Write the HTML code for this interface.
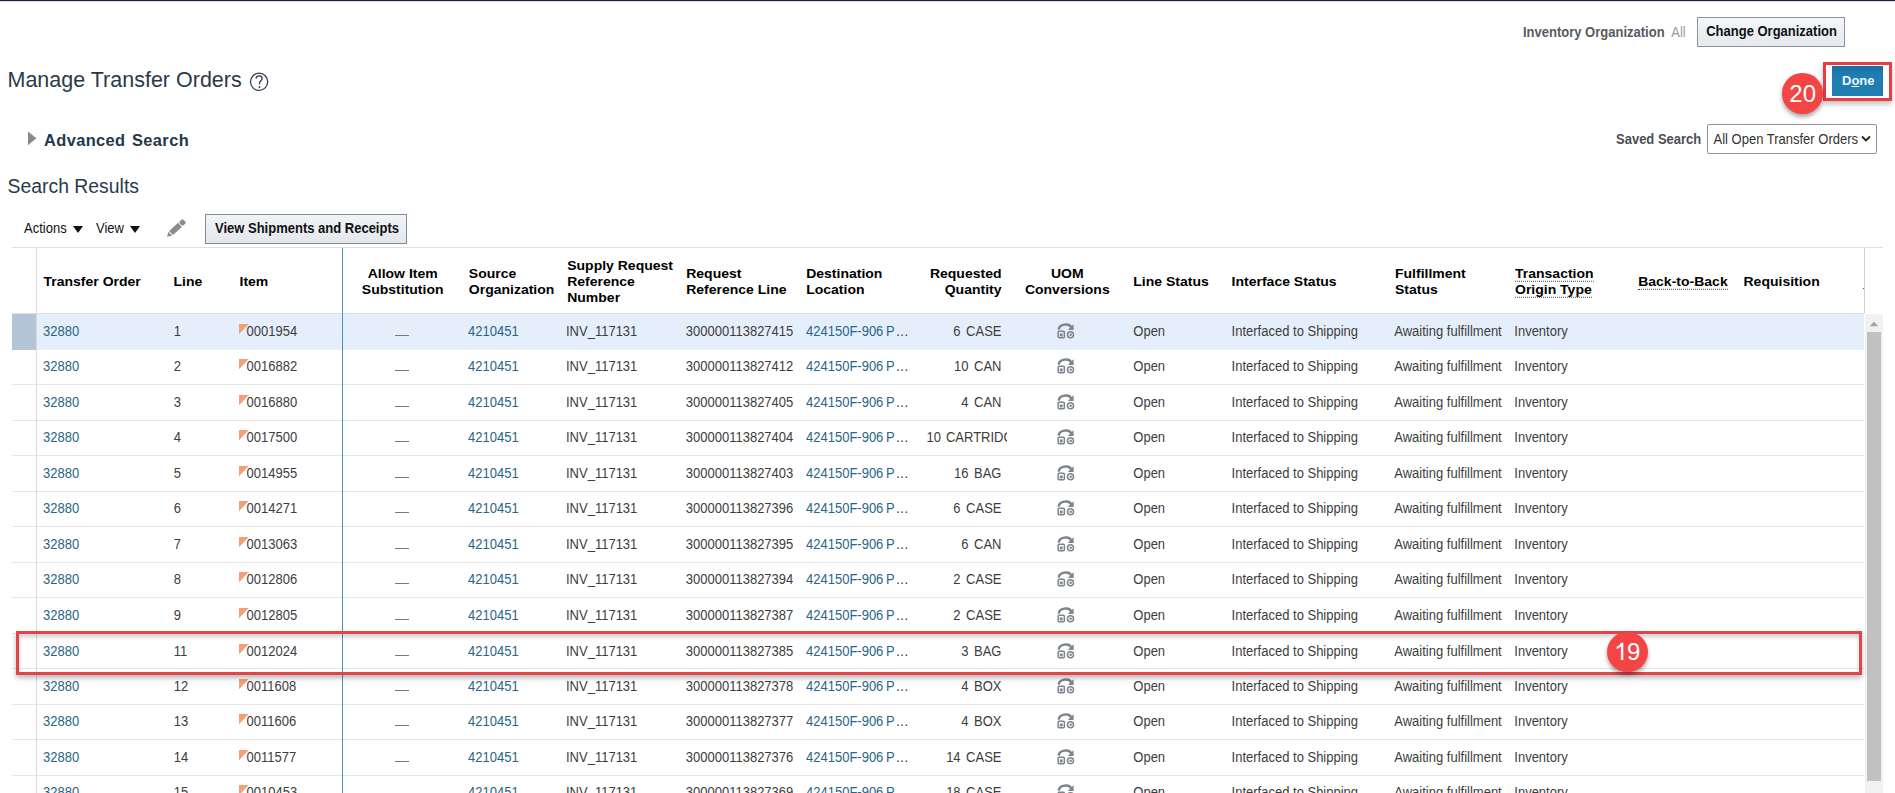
<!DOCTYPE html>
<html><head><meta charset="utf-8"><title>Manage Transfer Orders</title><style>
*{box-sizing:border-box;margin:0;padding:0}
html,body{width:1895px;height:793px;overflow:hidden;background:#fff}
body{position:relative;font-family:"Liberation Sans",sans-serif;color:#333}
.a{position:absolute;white-space:nowrap}
.lk{color:#296586}
.hl{position:absolute;height:1px;background:#e6e6e6}
</style></head><body>
<div class="a" style="left:0;top:0;width:1895px;height:1px;background:#221c4a"></div>
<div class="a" style="left:0;top:1px;width:1895px;height:1px;background:#dcdae6"></div>
<div class="a " style="left:1523px;top:25.30px;font-size:13px;line-height:16px;font-weight:bold;color:#555b63;transform:scaleY(1.08);transform-origin:0 12.50px;">Inventory Organization</div>
<div class="a " style="left:1671.3px;top:25.30px;font-size:13px;line-height:16px;color:#9a9a9a;transform:scaleY(1.08);transform-origin:0 12.50px;">All</div>
<div class="a" style="left:1697px;top:17px;width:148px;height:30px;border:1px solid #8a949e;background:linear-gradient(#f4f6f8,#e6e9ed)"></div>
<div class="a " style="left:1706.2px;top:23.90px;font-size:13px;line-height:16px;font-weight:bold;color:#111;transform:scaleY(1.08);transform-origin:0 12.50px;">Change Organization</div>
<div class="a " style="left:7.5px;top:67.45px;font-size:21.5px;line-height:27px;color:#2a3a4a;transform:scaleY(1.03);transform-origin:0 20.95px;">Manage Transfer Orders</div>
<svg class="a" style="left:249px;top:72px" width="20" height="20" viewBox="0 0 20 20"><circle cx="10.1" cy="9.8" r="8.6" fill="none" stroke="#2f3b48" stroke-width="1.25"/><path d="M7.0 6.6 C7.2 4.6 8.6 3.9 10.1 3.9 C12.0 3.9 13.2 5.0 13.2 6.6 C13.2 8.4 11.2 8.9 10.6 10.6 L10.5 12.4" fill="none" stroke="#2f3b48" stroke-width="1.3"/><rect x="9.7" y="14.2" width="1.6" height="1.7" fill="#2f3b48"/></svg>
<div class="a" style="left:1823px;top:62px;width:69px;height:39px;border:3px solid #e53f45;box-shadow:0 3px 5px rgba(0,0,0,.25)"></div>
<div class="a" style="left:1832px;top:66px;width:51px;height:30px;background:linear-gradient(#1b6f9f,#1f7db2 30%)"></div>
<div class="a " style="left:1842px;top:73.20px;font-size:13px;line-height:16px;font-weight:bold;color:#eaf6ff;transform:scaleY(1.0);transform-origin:0 12.50px;">D<span style="text-decoration:underline">o</span>ne</div>
<div class="a" style="left:1782px;top:73px;width:40.5px;height:40.5px;border-radius:50%;background:#f44444;box-shadow:0 3px 4px rgba(0,0,0,.35)"></div>
<div class="a " style="left:1789.3px;top:78.78px;font-size:24px;line-height:30px;color:#fff;transform:scaleY(1.0);transform-origin:0 23.32px;">20</div>
<svg class="a" style="left:27px;top:131px" width="10" height="15" viewBox="0 0 10 15"><path d="M1 0.5 L9.4 7.3 L1 14.2 Z" fill="#8a8a8a"/></svg>
<div class="a " style="left:44px;top:129.82px;font-size:16.4px;line-height:20px;font-weight:bold;color:#24384c;transform:scaleY(1.0);transform-origin:0 15.68px;letter-spacing:0.4px;word-spacing:1.5px">Advanced Search</div>
<div class="a " style="left:1616px;top:131.80px;font-size:13px;line-height:16px;font-weight:bold;color:#4a4f55;transform:scaleY(1.08);transform-origin:0 12.50px;">Saved Search</div>
<div class="a" style="left:1707px;top:124px;width:170px;height:30px;border:1px solid #8d959c;border-radius:2px;background:#fff"></div>
<div class="a " style="left:1713.5px;top:131.80px;font-size:13px;line-height:16px;color:#333;transform:scaleY(1.08);transform-origin:0 12.50px;">All Open Transfer Orders</div>
<svg class="a" style="left:1861px;top:135px" width="10" height="8" viewBox="0 0 10 8"><path d="M1 1.5 L5 5.5 L9 1.5" fill="none" stroke="#222" stroke-width="1.8"/></svg>
<div class="a " style="left:7.5px;top:173.98px;font-size:19.4px;line-height:24px;color:#2a3a4a;transform:scaleY(1.0);transform-origin:0 18.72px;">Search Results</div>
<div class="a " style="left:24px;top:220.70px;font-size:13px;line-height:16px;color:#111;transform:scaleY(1.08);transform-origin:0 12.50px;">Actions</div>
<svg class="a" style="left:73px;top:226px" width="10" height="7" viewBox="0 0 10 7"><path d="M0 0 H10 L5 7 Z" fill="#111"/></svg>
<div class="a " style="left:96px;top:220.70px;font-size:13px;line-height:16px;color:#111;transform:scaleY(1.08);transform-origin:0 12.50px;">View</div>
<svg class="a" style="left:130px;top:226px" width="10" height="7" viewBox="0 0 10 7"><path d="M0 0 H10 L5 7 Z" fill="#111"/></svg>
<svg class="a" style="left:160px;top:215px" width="30" height="28" viewBox="0 0 30 28"><g transform="translate(7.0 21.8) rotate(-42.6)" fill="#8c8c8c"><path d="M0 0 L4.6 -2.75 L4.6 2.75 Z"/><rect x="5.5" y="-2.75" width="12.1" height="5.5"/><rect x="18.5" y="-2.75" width="5.2" height="5.5" rx="1.4"/></g></svg>
<div class="a" style="left:205px;top:214px;width:202px;height:30px;border:1px solid #7f8d9a;background:linear-gradient(#f1f3f6,#e3e7ec)"></div>
<div class="a " style="left:215px;top:221.10px;font-size:13px;line-height:16px;font-weight:bold;color:#111;transform:scaleY(1.08);transform-origin:0 12.50px;">View Shipments and Receipts</div>
<div class="a" style="left:12px;top:247px;width:1871px;height:1px;background:#dde0e3"></div>
<div class="a" style="left:12px;top:313px;width:1852px;height:1px;background:#dcdfe3"></div>
<div class="a" style="left:1864px;top:248px;width:1px;height:65px;background:#cfcfcf"></div>
<div class="a" style="left:1863px;top:288px;width:1px;height:1px;background:#555"></div>
<div class="a" style="left:36px;top:314px;width:1828px;height:35.5px;background:#e5effb"></div>
<div class="a" style="left:12px;top:314px;width:24px;height:35.5px;background:#b3c4d6"></div>
<div class="hl" style="left:12px;top:384.00px;width:1852px"></div>
<div class="hl" style="left:12px;top:419.50px;width:1852px"></div>
<div class="hl" style="left:12px;top:455.00px;width:1852px"></div>
<div class="hl" style="left:12px;top:490.50px;width:1852px"></div>
<div class="hl" style="left:12px;top:526.00px;width:1852px"></div>
<div class="hl" style="left:12px;top:561.50px;width:1852px"></div>
<div class="hl" style="left:12px;top:597.00px;width:1852px"></div>
<div class="hl" style="left:12px;top:632.50px;width:1852px"></div>
<div class="hl" style="left:12px;top:668.00px;width:1852px"></div>
<div class="hl" style="left:12px;top:703.50px;width:1852px"></div>
<div class="hl" style="left:12px;top:739.00px;width:1852px"></div>
<div class="hl" style="left:12px;top:774.50px;width:1852px"></div>
<div class="hl" style="left:12px;top:810.00px;width:1852px"></div>
<div class="a" style="left:36px;top:248px;width:1px;height:545px;background:#d9d9d9"></div>
<div class="a" style="left:342px;top:248px;width:1px;height:545px;background:#4594b3"></div>
<div class="a " style="left:43.5px;top:272.25px;font-size:14px;line-height:18px;font-weight:bold;color:#000;transform:scaleY(0.94);transform-origin:0 13.85px;">Transfer Order</div>
<div class="a " style="left:173.5px;top:272.25px;font-size:14px;line-height:18px;font-weight:bold;color:#000;transform:scaleY(0.94);transform-origin:0 13.85px;">Line</div>
<div class="a " style="left:239.5px;top:272.25px;font-size:14px;line-height:18px;font-weight:bold;color:#000;transform:scaleY(0.94);transform-origin:0 13.85px;">Item</div>
<div class="a " style="left:342.7px;top:264.25px;font-size:14px;line-height:18px;font-weight:bold;color:#000;transform:scaleY(0.94);transform-origin:0 13.85px;width:120px;text-align:center;">Allow Item</div>
<div class="a " style="left:342.7px;top:280.25px;font-size:14px;line-height:18px;font-weight:bold;color:#000;transform:scaleY(0.94);transform-origin:0 13.85px;width:120px;text-align:center;">Substitution</div>
<div class="a " style="left:468.8px;top:264.25px;font-size:14px;line-height:18px;font-weight:bold;color:#000;transform:scaleY(0.94);transform-origin:0 13.85px;">Source</div>
<div class="a " style="left:468.8px;top:280.25px;font-size:14px;line-height:18px;font-weight:bold;color:#000;transform:scaleY(0.94);transform-origin:0 13.85px;">Organization</div>
<div class="a " style="left:567.2px;top:256.25px;font-size:14px;line-height:18px;font-weight:bold;color:#000;transform:scaleY(0.94);transform-origin:0 13.85px;">Supply Request</div>
<div class="a " style="left:567.2px;top:272.25px;font-size:14px;line-height:18px;font-weight:bold;color:#000;transform:scaleY(0.94);transform-origin:0 13.85px;">Reference</div>
<div class="a " style="left:567.2px;top:288.25px;font-size:14px;line-height:18px;font-weight:bold;color:#000;transform:scaleY(0.94);transform-origin:0 13.85px;">Number</div>
<div class="a " style="left:686.2px;top:264.25px;font-size:14px;line-height:18px;font-weight:bold;color:#000;transform:scaleY(0.94);transform-origin:0 13.85px;">Request</div>
<div class="a " style="left:686.2px;top:280.25px;font-size:14px;line-height:18px;font-weight:bold;color:#000;transform:scaleY(0.94);transform-origin:0 13.85px;">Reference Line</div>
<div class="a " style="left:806.2px;top:264.25px;font-size:14px;line-height:18px;font-weight:bold;color:#000;transform:scaleY(0.94);transform-origin:0 13.85px;">Destination</div>
<div class="a " style="left:806.2px;top:280.25px;font-size:14px;line-height:18px;font-weight:bold;color:#000;transform:scaleY(0.94);transform-origin:0 13.85px;">Location</div>
<div class="a " style="left:881.5px;top:264.25px;font-size:14px;line-height:18px;font-weight:bold;color:#000;transform:scaleY(0.94);transform-origin:0 13.85px;width:120px;text-align:right;">Requested</div>
<div class="a " style="left:881.5px;top:280.25px;font-size:14px;line-height:18px;font-weight:bold;color:#000;transform:scaleY(0.94);transform-origin:0 13.85px;width:120px;text-align:right;">Quantity</div>
<div class="a " style="left:1007.3px;top:264.25px;font-size:14px;line-height:18px;font-weight:bold;color:#000;transform:scaleY(0.94);transform-origin:0 13.85px;width:120px;text-align:center;">UOM</div>
<div class="a " style="left:1007.3px;top:280.25px;font-size:14px;line-height:18px;font-weight:bold;color:#000;transform:scaleY(0.94);transform-origin:0 13.85px;width:120px;text-align:center;">Conversions</div>
<div class="a " style="left:1133.3px;top:272.25px;font-size:14px;line-height:18px;font-weight:bold;color:#000;transform:scaleY(0.94);transform-origin:0 13.85px;">Line Status</div>
<div class="a " style="left:1231.6px;top:272.25px;font-size:14px;line-height:18px;font-weight:bold;color:#000;transform:scaleY(0.94);transform-origin:0 13.85px;">Interface Status</div>
<div class="a " style="left:1395px;top:264.25px;font-size:14px;line-height:18px;font-weight:bold;color:#000;transform:scaleY(0.94);transform-origin:0 13.85px;">Fulfillment</div>
<div class="a " style="left:1395px;top:280.25px;font-size:14px;line-height:18px;font-weight:bold;color:#000;transform:scaleY(0.94);transform-origin:0 13.85px;">Status</div>
<div class="a " style="left:1515px;top:264.25px;font-size:14px;line-height:18px;font-weight:bold;color:#000;transform:scaleY(0.94);transform-origin:0 13.85px;"><span style="border-bottom:1px dotted #444;padding-bottom:0">Transaction</span></div>
<div class="a " style="left:1515px;top:280.25px;font-size:14px;line-height:18px;font-weight:bold;color:#000;transform:scaleY(0.94);transform-origin:0 13.85px;"><span style="border-bottom:1px dotted #444;padding-bottom:0">Origin Type</span></div>
<div class="a " style="left:1638.2px;top:272.25px;font-size:14px;line-height:18px;font-weight:bold;color:#000;transform:scaleY(0.94);transform-origin:0 13.85px;"><span style="border-bottom:1px dotted #444;padding-bottom:0">Back-to-Back</span></div>
<div class="a " style="left:1743.5px;top:272.25px;font-size:14px;line-height:18px;font-weight:bold;color:#000;transform:scaleY(0.94);transform-origin:0 13.85px;">Requisition</div>
<div class="a lk" style="left:43px;top:323.55px;font-size:13px;line-height:16px;color:#296586;transform:scaleY(1.08);transform-origin:0 12.50px;">32880</div>
<div class="a " style="left:173.8px;top:323.55px;font-size:13px;line-height:16px;color:#3d3d3d;transform:scaleY(1.08);transform-origin:0 12.50px;">1</div>
<svg class="a" style="left:239px;top:323.55px" width="10" height="11" viewBox="0 0 10 11"><path d="M0 0 H9.8 L0 10.2 Z" fill="#f1a078"/></svg>
<div class="a " style="left:246.5px;top:323.55px;font-size:13px;line-height:16px;color:#3d3d3d;transform:scaleY(1.08);transform-origin:0 12.50px;">0001954</div>
<div class="a" style="left:395px;top:334.75px;width:14px;height:1.2px;background:#7a7a7a"></div>
<div class="a " style="left:468px;top:323.55px;font-size:13px;line-height:16px;color:#296586;transform:scaleY(1.08);transform-origin:0 12.50px;">4210451</div>
<div class="a " style="left:566px;top:323.55px;font-size:13px;line-height:16px;color:#3d3d3d;transform:scaleY(1.08);transform-origin:0 12.50px;">INV_117131</div>
<div class="a " style="left:685.8px;top:323.55px;font-size:13px;line-height:16px;color:#3d3d3d;transform:scaleY(1.08);transform-origin:0 12.50px;">300000113827415</div>
<div class="a " style="left:806px;top:323.55px;font-size:13px;line-height:16px;color:#296586;transform:scaleY(1.08);transform-origin:0 12.50px;">424150F-906<span style="margin-left:2.7px">P</span><span style="color:#333;letter-spacing:0.45px;margin-left:1.6px">...</span></div>
<div class="a " style="left:900px;top:323.55px;font-size:13px;line-height:16px;color:#3d3d3d;transform:scaleY(1.08);transform-origin:0 12.50px;width:101.5px;text-align:right">6<span style="margin-left:5.5px">CASE</span></div>
<div class="a" style="left:1056.5px;top:322.85px;width:18px;height:16px"><svg width="18" height="16" viewBox="0 0 18 16"><path d="M1.7 6.6 C2.2 1.0 11.8 -0.3 14.3 4.3" fill="none" stroke="#7d848b" stroke-width="2.5"/><path d="M16.6 1.3 L16.6 7.1 L10.8 7.1 Z" fill="#7d848b"/><rect x="1.15" y="8.35" width="6.2" height="6.3" rx="1" fill="none" stroke="#7d848b" stroke-width="1.5"/><rect x="2.8" y="10.5" width="2.8" height="2.9" fill="#7d848b"/><circle cx="13.5" cy="11.7" r="3.0" fill="none" stroke="#7d848b" stroke-width="1.5"/><circle cx="13.7" cy="11.8" r="1.2" fill="#7d848b"/></svg></div>
<div class="a " style="left:1133.3px;top:323.55px;font-size:13px;line-height:16px;color:#3d3d3d;transform:scaleY(1.08);transform-origin:0 12.50px;">Open</div>
<div class="a " style="left:1231.6px;top:323.55px;font-size:13px;line-height:16px;color:#3d3d3d;transform:scaleY(1.08);transform-origin:0 12.50px;">Interfaced to Shipping</div>
<div class="a " style="left:1394.3px;top:323.55px;font-size:13px;line-height:16px;color:#3d3d3d;transform:scaleY(1.08);transform-origin:0 12.50px;">Awaiting fulfillment</div>
<div class="a " style="left:1514.3px;top:323.55px;font-size:13px;line-height:16px;color:#3d3d3d;transform:scaleY(1.08);transform-origin:0 12.50px;">Inventory</div>
<div class="a lk" style="left:43px;top:359.05px;font-size:13px;line-height:16px;color:#296586;transform:scaleY(1.08);transform-origin:0 12.50px;">32880</div>
<div class="a " style="left:173.8px;top:359.05px;font-size:13px;line-height:16px;color:#3d3d3d;transform:scaleY(1.08);transform-origin:0 12.50px;">2</div>
<svg class="a" style="left:239px;top:359.05px" width="10" height="11" viewBox="0 0 10 11"><path d="M0 0 H9.8 L0 10.2 Z" fill="#f1a078"/></svg>
<div class="a " style="left:246.5px;top:359.05px;font-size:13px;line-height:16px;color:#3d3d3d;transform:scaleY(1.08);transform-origin:0 12.50px;">0016882</div>
<div class="a" style="left:395px;top:370.25px;width:14px;height:1.2px;background:#7a7a7a"></div>
<div class="a " style="left:468px;top:359.05px;font-size:13px;line-height:16px;color:#296586;transform:scaleY(1.08);transform-origin:0 12.50px;">4210451</div>
<div class="a " style="left:566px;top:359.05px;font-size:13px;line-height:16px;color:#3d3d3d;transform:scaleY(1.08);transform-origin:0 12.50px;">INV_117131</div>
<div class="a " style="left:685.8px;top:359.05px;font-size:13px;line-height:16px;color:#3d3d3d;transform:scaleY(1.08);transform-origin:0 12.50px;">300000113827412</div>
<div class="a " style="left:806px;top:359.05px;font-size:13px;line-height:16px;color:#296586;transform:scaleY(1.08);transform-origin:0 12.50px;">424150F-906<span style="margin-left:2.7px">P</span><span style="color:#333;letter-spacing:0.45px;margin-left:1.6px">...</span></div>
<div class="a " style="left:900px;top:359.05px;font-size:13px;line-height:16px;color:#3d3d3d;transform:scaleY(1.08);transform-origin:0 12.50px;width:101.5px;text-align:right">10<span style="margin-left:5.5px">CAN</span></div>
<div class="a" style="left:1056.5px;top:358.35px;width:18px;height:16px"><svg width="18" height="16" viewBox="0 0 18 16"><path d="M1.7 6.6 C2.2 1.0 11.8 -0.3 14.3 4.3" fill="none" stroke="#7d848b" stroke-width="2.5"/><path d="M16.6 1.3 L16.6 7.1 L10.8 7.1 Z" fill="#7d848b"/><rect x="1.15" y="8.35" width="6.2" height="6.3" rx="1" fill="none" stroke="#7d848b" stroke-width="1.5"/><rect x="2.8" y="10.5" width="2.8" height="2.9" fill="#7d848b"/><circle cx="13.5" cy="11.7" r="3.0" fill="none" stroke="#7d848b" stroke-width="1.5"/><circle cx="13.7" cy="11.8" r="1.2" fill="#7d848b"/></svg></div>
<div class="a " style="left:1133.3px;top:359.05px;font-size:13px;line-height:16px;color:#3d3d3d;transform:scaleY(1.08);transform-origin:0 12.50px;">Open</div>
<div class="a " style="left:1231.6px;top:359.05px;font-size:13px;line-height:16px;color:#3d3d3d;transform:scaleY(1.08);transform-origin:0 12.50px;">Interfaced to Shipping</div>
<div class="a " style="left:1394.3px;top:359.05px;font-size:13px;line-height:16px;color:#3d3d3d;transform:scaleY(1.08);transform-origin:0 12.50px;">Awaiting fulfillment</div>
<div class="a " style="left:1514.3px;top:359.05px;font-size:13px;line-height:16px;color:#3d3d3d;transform:scaleY(1.08);transform-origin:0 12.50px;">Inventory</div>
<div class="a lk" style="left:43px;top:394.55px;font-size:13px;line-height:16px;color:#296586;transform:scaleY(1.08);transform-origin:0 12.50px;">32880</div>
<div class="a " style="left:173.8px;top:394.55px;font-size:13px;line-height:16px;color:#3d3d3d;transform:scaleY(1.08);transform-origin:0 12.50px;">3</div>
<svg class="a" style="left:239px;top:394.55px" width="10" height="11" viewBox="0 0 10 11"><path d="M0 0 H9.8 L0 10.2 Z" fill="#f1a078"/></svg>
<div class="a " style="left:246.5px;top:394.55px;font-size:13px;line-height:16px;color:#3d3d3d;transform:scaleY(1.08);transform-origin:0 12.50px;">0016880</div>
<div class="a" style="left:395px;top:405.75px;width:14px;height:1.2px;background:#7a7a7a"></div>
<div class="a " style="left:468px;top:394.55px;font-size:13px;line-height:16px;color:#296586;transform:scaleY(1.08);transform-origin:0 12.50px;">4210451</div>
<div class="a " style="left:566px;top:394.55px;font-size:13px;line-height:16px;color:#3d3d3d;transform:scaleY(1.08);transform-origin:0 12.50px;">INV_117131</div>
<div class="a " style="left:685.8px;top:394.55px;font-size:13px;line-height:16px;color:#3d3d3d;transform:scaleY(1.08);transform-origin:0 12.50px;">300000113827405</div>
<div class="a " style="left:806px;top:394.55px;font-size:13px;line-height:16px;color:#296586;transform:scaleY(1.08);transform-origin:0 12.50px;">424150F-906<span style="margin-left:2.7px">P</span><span style="color:#333;letter-spacing:0.45px;margin-left:1.6px">...</span></div>
<div class="a " style="left:900px;top:394.55px;font-size:13px;line-height:16px;color:#3d3d3d;transform:scaleY(1.08);transform-origin:0 12.50px;width:101.5px;text-align:right">4<span style="margin-left:5.5px">CAN</span></div>
<div class="a" style="left:1056.5px;top:393.85px;width:18px;height:16px"><svg width="18" height="16" viewBox="0 0 18 16"><path d="M1.7 6.6 C2.2 1.0 11.8 -0.3 14.3 4.3" fill="none" stroke="#7d848b" stroke-width="2.5"/><path d="M16.6 1.3 L16.6 7.1 L10.8 7.1 Z" fill="#7d848b"/><rect x="1.15" y="8.35" width="6.2" height="6.3" rx="1" fill="none" stroke="#7d848b" stroke-width="1.5"/><rect x="2.8" y="10.5" width="2.8" height="2.9" fill="#7d848b"/><circle cx="13.5" cy="11.7" r="3.0" fill="none" stroke="#7d848b" stroke-width="1.5"/><circle cx="13.7" cy="11.8" r="1.2" fill="#7d848b"/></svg></div>
<div class="a " style="left:1133.3px;top:394.55px;font-size:13px;line-height:16px;color:#3d3d3d;transform:scaleY(1.08);transform-origin:0 12.50px;">Open</div>
<div class="a " style="left:1231.6px;top:394.55px;font-size:13px;line-height:16px;color:#3d3d3d;transform:scaleY(1.08);transform-origin:0 12.50px;">Interfaced to Shipping</div>
<div class="a " style="left:1394.3px;top:394.55px;font-size:13px;line-height:16px;color:#3d3d3d;transform:scaleY(1.08);transform-origin:0 12.50px;">Awaiting fulfillment</div>
<div class="a " style="left:1514.3px;top:394.55px;font-size:13px;line-height:16px;color:#3d3d3d;transform:scaleY(1.08);transform-origin:0 12.50px;">Inventory</div>
<div class="a lk" style="left:43px;top:430.05px;font-size:13px;line-height:16px;color:#296586;transform:scaleY(1.08);transform-origin:0 12.50px;">32880</div>
<div class="a " style="left:173.8px;top:430.05px;font-size:13px;line-height:16px;color:#3d3d3d;transform:scaleY(1.08);transform-origin:0 12.50px;">4</div>
<svg class="a" style="left:239px;top:430.05px" width="10" height="11" viewBox="0 0 10 11"><path d="M0 0 H9.8 L0 10.2 Z" fill="#f1a078"/></svg>
<div class="a " style="left:246.5px;top:430.05px;font-size:13px;line-height:16px;color:#3d3d3d;transform:scaleY(1.08);transform-origin:0 12.50px;">0017500</div>
<div class="a" style="left:395px;top:441.25px;width:14px;height:1.2px;background:#7a7a7a"></div>
<div class="a " style="left:468px;top:430.05px;font-size:13px;line-height:16px;color:#296586;transform:scaleY(1.08);transform-origin:0 12.50px;">4210451</div>
<div class="a " style="left:566px;top:430.05px;font-size:13px;line-height:16px;color:#3d3d3d;transform:scaleY(1.08);transform-origin:0 12.50px;">INV_117131</div>
<div class="a " style="left:685.8px;top:430.05px;font-size:13px;line-height:16px;color:#3d3d3d;transform:scaleY(1.08);transform-origin:0 12.50px;">300000113827404</div>
<div class="a " style="left:806px;top:430.05px;font-size:13px;line-height:16px;color:#296586;transform:scaleY(1.08);transform-origin:0 12.50px;">424150F-906<span style="margin-left:2.7px">P</span><span style="color:#333;letter-spacing:0.45px;margin-left:1.6px">...</span></div>
<div class="a " style="left:926.5px;top:430.05px;font-size:13px;line-height:16px;color:#3d3d3d;transform:scaleY(1.08);transform-origin:0 12.50px;width:80.5px;overflow:hidden">10<span style="margin-left:5px">CARTRIDGE</span></div>
<div class="a" style="left:1056.5px;top:429.35px;width:18px;height:16px"><svg width="18" height="16" viewBox="0 0 18 16"><path d="M1.7 6.6 C2.2 1.0 11.8 -0.3 14.3 4.3" fill="none" stroke="#7d848b" stroke-width="2.5"/><path d="M16.6 1.3 L16.6 7.1 L10.8 7.1 Z" fill="#7d848b"/><rect x="1.15" y="8.35" width="6.2" height="6.3" rx="1" fill="none" stroke="#7d848b" stroke-width="1.5"/><rect x="2.8" y="10.5" width="2.8" height="2.9" fill="#7d848b"/><circle cx="13.5" cy="11.7" r="3.0" fill="none" stroke="#7d848b" stroke-width="1.5"/><circle cx="13.7" cy="11.8" r="1.2" fill="#7d848b"/></svg></div>
<div class="a " style="left:1133.3px;top:430.05px;font-size:13px;line-height:16px;color:#3d3d3d;transform:scaleY(1.08);transform-origin:0 12.50px;">Open</div>
<div class="a " style="left:1231.6px;top:430.05px;font-size:13px;line-height:16px;color:#3d3d3d;transform:scaleY(1.08);transform-origin:0 12.50px;">Interfaced to Shipping</div>
<div class="a " style="left:1394.3px;top:430.05px;font-size:13px;line-height:16px;color:#3d3d3d;transform:scaleY(1.08);transform-origin:0 12.50px;">Awaiting fulfillment</div>
<div class="a " style="left:1514.3px;top:430.05px;font-size:13px;line-height:16px;color:#3d3d3d;transform:scaleY(1.08);transform-origin:0 12.50px;">Inventory</div>
<div class="a lk" style="left:43px;top:465.55px;font-size:13px;line-height:16px;color:#296586;transform:scaleY(1.08);transform-origin:0 12.50px;">32880</div>
<div class="a " style="left:173.8px;top:465.55px;font-size:13px;line-height:16px;color:#3d3d3d;transform:scaleY(1.08);transform-origin:0 12.50px;">5</div>
<svg class="a" style="left:239px;top:465.55px" width="10" height="11" viewBox="0 0 10 11"><path d="M0 0 H9.8 L0 10.2 Z" fill="#f1a078"/></svg>
<div class="a " style="left:246.5px;top:465.55px;font-size:13px;line-height:16px;color:#3d3d3d;transform:scaleY(1.08);transform-origin:0 12.50px;">0014955</div>
<div class="a" style="left:395px;top:476.75px;width:14px;height:1.2px;background:#7a7a7a"></div>
<div class="a " style="left:468px;top:465.55px;font-size:13px;line-height:16px;color:#296586;transform:scaleY(1.08);transform-origin:0 12.50px;">4210451</div>
<div class="a " style="left:566px;top:465.55px;font-size:13px;line-height:16px;color:#3d3d3d;transform:scaleY(1.08);transform-origin:0 12.50px;">INV_117131</div>
<div class="a " style="left:685.8px;top:465.55px;font-size:13px;line-height:16px;color:#3d3d3d;transform:scaleY(1.08);transform-origin:0 12.50px;">300000113827403</div>
<div class="a " style="left:806px;top:465.55px;font-size:13px;line-height:16px;color:#296586;transform:scaleY(1.08);transform-origin:0 12.50px;">424150F-906<span style="margin-left:2.7px">P</span><span style="color:#333;letter-spacing:0.45px;margin-left:1.6px">...</span></div>
<div class="a " style="left:900px;top:465.55px;font-size:13px;line-height:16px;color:#3d3d3d;transform:scaleY(1.08);transform-origin:0 12.50px;width:101.5px;text-align:right">16<span style="margin-left:5.5px">BAG</span></div>
<div class="a" style="left:1056.5px;top:464.85px;width:18px;height:16px"><svg width="18" height="16" viewBox="0 0 18 16"><path d="M1.7 6.6 C2.2 1.0 11.8 -0.3 14.3 4.3" fill="none" stroke="#7d848b" stroke-width="2.5"/><path d="M16.6 1.3 L16.6 7.1 L10.8 7.1 Z" fill="#7d848b"/><rect x="1.15" y="8.35" width="6.2" height="6.3" rx="1" fill="none" stroke="#7d848b" stroke-width="1.5"/><rect x="2.8" y="10.5" width="2.8" height="2.9" fill="#7d848b"/><circle cx="13.5" cy="11.7" r="3.0" fill="none" stroke="#7d848b" stroke-width="1.5"/><circle cx="13.7" cy="11.8" r="1.2" fill="#7d848b"/></svg></div>
<div class="a " style="left:1133.3px;top:465.55px;font-size:13px;line-height:16px;color:#3d3d3d;transform:scaleY(1.08);transform-origin:0 12.50px;">Open</div>
<div class="a " style="left:1231.6px;top:465.55px;font-size:13px;line-height:16px;color:#3d3d3d;transform:scaleY(1.08);transform-origin:0 12.50px;">Interfaced to Shipping</div>
<div class="a " style="left:1394.3px;top:465.55px;font-size:13px;line-height:16px;color:#3d3d3d;transform:scaleY(1.08);transform-origin:0 12.50px;">Awaiting fulfillment</div>
<div class="a " style="left:1514.3px;top:465.55px;font-size:13px;line-height:16px;color:#3d3d3d;transform:scaleY(1.08);transform-origin:0 12.50px;">Inventory</div>
<div class="a lk" style="left:43px;top:501.05px;font-size:13px;line-height:16px;color:#296586;transform:scaleY(1.08);transform-origin:0 12.50px;">32880</div>
<div class="a " style="left:173.8px;top:501.05px;font-size:13px;line-height:16px;color:#3d3d3d;transform:scaleY(1.08);transform-origin:0 12.50px;">6</div>
<svg class="a" style="left:239px;top:501.05px" width="10" height="11" viewBox="0 0 10 11"><path d="M0 0 H9.8 L0 10.2 Z" fill="#f1a078"/></svg>
<div class="a " style="left:246.5px;top:501.05px;font-size:13px;line-height:16px;color:#3d3d3d;transform:scaleY(1.08);transform-origin:0 12.50px;">0014271</div>
<div class="a" style="left:395px;top:512.25px;width:14px;height:1.2px;background:#7a7a7a"></div>
<div class="a " style="left:468px;top:501.05px;font-size:13px;line-height:16px;color:#296586;transform:scaleY(1.08);transform-origin:0 12.50px;">4210451</div>
<div class="a " style="left:566px;top:501.05px;font-size:13px;line-height:16px;color:#3d3d3d;transform:scaleY(1.08);transform-origin:0 12.50px;">INV_117131</div>
<div class="a " style="left:685.8px;top:501.05px;font-size:13px;line-height:16px;color:#3d3d3d;transform:scaleY(1.08);transform-origin:0 12.50px;">300000113827396</div>
<div class="a " style="left:806px;top:501.05px;font-size:13px;line-height:16px;color:#296586;transform:scaleY(1.08);transform-origin:0 12.50px;">424150F-906<span style="margin-left:2.7px">P</span><span style="color:#333;letter-spacing:0.45px;margin-left:1.6px">...</span></div>
<div class="a " style="left:900px;top:501.05px;font-size:13px;line-height:16px;color:#3d3d3d;transform:scaleY(1.08);transform-origin:0 12.50px;width:101.5px;text-align:right">6<span style="margin-left:5.5px">CASE</span></div>
<div class="a" style="left:1056.5px;top:500.35px;width:18px;height:16px"><svg width="18" height="16" viewBox="0 0 18 16"><path d="M1.7 6.6 C2.2 1.0 11.8 -0.3 14.3 4.3" fill="none" stroke="#7d848b" stroke-width="2.5"/><path d="M16.6 1.3 L16.6 7.1 L10.8 7.1 Z" fill="#7d848b"/><rect x="1.15" y="8.35" width="6.2" height="6.3" rx="1" fill="none" stroke="#7d848b" stroke-width="1.5"/><rect x="2.8" y="10.5" width="2.8" height="2.9" fill="#7d848b"/><circle cx="13.5" cy="11.7" r="3.0" fill="none" stroke="#7d848b" stroke-width="1.5"/><circle cx="13.7" cy="11.8" r="1.2" fill="#7d848b"/></svg></div>
<div class="a " style="left:1133.3px;top:501.05px;font-size:13px;line-height:16px;color:#3d3d3d;transform:scaleY(1.08);transform-origin:0 12.50px;">Open</div>
<div class="a " style="left:1231.6px;top:501.05px;font-size:13px;line-height:16px;color:#3d3d3d;transform:scaleY(1.08);transform-origin:0 12.50px;">Interfaced to Shipping</div>
<div class="a " style="left:1394.3px;top:501.05px;font-size:13px;line-height:16px;color:#3d3d3d;transform:scaleY(1.08);transform-origin:0 12.50px;">Awaiting fulfillment</div>
<div class="a " style="left:1514.3px;top:501.05px;font-size:13px;line-height:16px;color:#3d3d3d;transform:scaleY(1.08);transform-origin:0 12.50px;">Inventory</div>
<div class="a lk" style="left:43px;top:536.55px;font-size:13px;line-height:16px;color:#296586;transform:scaleY(1.08);transform-origin:0 12.50px;">32880</div>
<div class="a " style="left:173.8px;top:536.55px;font-size:13px;line-height:16px;color:#3d3d3d;transform:scaleY(1.08);transform-origin:0 12.50px;">7</div>
<svg class="a" style="left:239px;top:536.55px" width="10" height="11" viewBox="0 0 10 11"><path d="M0 0 H9.8 L0 10.2 Z" fill="#f1a078"/></svg>
<div class="a " style="left:246.5px;top:536.55px;font-size:13px;line-height:16px;color:#3d3d3d;transform:scaleY(1.08);transform-origin:0 12.50px;">0013063</div>
<div class="a" style="left:395px;top:547.75px;width:14px;height:1.2px;background:#7a7a7a"></div>
<div class="a " style="left:468px;top:536.55px;font-size:13px;line-height:16px;color:#296586;transform:scaleY(1.08);transform-origin:0 12.50px;">4210451</div>
<div class="a " style="left:566px;top:536.55px;font-size:13px;line-height:16px;color:#3d3d3d;transform:scaleY(1.08);transform-origin:0 12.50px;">INV_117131</div>
<div class="a " style="left:685.8px;top:536.55px;font-size:13px;line-height:16px;color:#3d3d3d;transform:scaleY(1.08);transform-origin:0 12.50px;">300000113827395</div>
<div class="a " style="left:806px;top:536.55px;font-size:13px;line-height:16px;color:#296586;transform:scaleY(1.08);transform-origin:0 12.50px;">424150F-906<span style="margin-left:2.7px">P</span><span style="color:#333;letter-spacing:0.45px;margin-left:1.6px">...</span></div>
<div class="a " style="left:900px;top:536.55px;font-size:13px;line-height:16px;color:#3d3d3d;transform:scaleY(1.08);transform-origin:0 12.50px;width:101.5px;text-align:right">6<span style="margin-left:5.5px">CAN</span></div>
<div class="a" style="left:1056.5px;top:535.85px;width:18px;height:16px"><svg width="18" height="16" viewBox="0 0 18 16"><path d="M1.7 6.6 C2.2 1.0 11.8 -0.3 14.3 4.3" fill="none" stroke="#7d848b" stroke-width="2.5"/><path d="M16.6 1.3 L16.6 7.1 L10.8 7.1 Z" fill="#7d848b"/><rect x="1.15" y="8.35" width="6.2" height="6.3" rx="1" fill="none" stroke="#7d848b" stroke-width="1.5"/><rect x="2.8" y="10.5" width="2.8" height="2.9" fill="#7d848b"/><circle cx="13.5" cy="11.7" r="3.0" fill="none" stroke="#7d848b" stroke-width="1.5"/><circle cx="13.7" cy="11.8" r="1.2" fill="#7d848b"/></svg></div>
<div class="a " style="left:1133.3px;top:536.55px;font-size:13px;line-height:16px;color:#3d3d3d;transform:scaleY(1.08);transform-origin:0 12.50px;">Open</div>
<div class="a " style="left:1231.6px;top:536.55px;font-size:13px;line-height:16px;color:#3d3d3d;transform:scaleY(1.08);transform-origin:0 12.50px;">Interfaced to Shipping</div>
<div class="a " style="left:1394.3px;top:536.55px;font-size:13px;line-height:16px;color:#3d3d3d;transform:scaleY(1.08);transform-origin:0 12.50px;">Awaiting fulfillment</div>
<div class="a " style="left:1514.3px;top:536.55px;font-size:13px;line-height:16px;color:#3d3d3d;transform:scaleY(1.08);transform-origin:0 12.50px;">Inventory</div>
<div class="a lk" style="left:43px;top:572.05px;font-size:13px;line-height:16px;color:#296586;transform:scaleY(1.08);transform-origin:0 12.50px;">32880</div>
<div class="a " style="left:173.8px;top:572.05px;font-size:13px;line-height:16px;color:#3d3d3d;transform:scaleY(1.08);transform-origin:0 12.50px;">8</div>
<svg class="a" style="left:239px;top:572.05px" width="10" height="11" viewBox="0 0 10 11"><path d="M0 0 H9.8 L0 10.2 Z" fill="#f1a078"/></svg>
<div class="a " style="left:246.5px;top:572.05px;font-size:13px;line-height:16px;color:#3d3d3d;transform:scaleY(1.08);transform-origin:0 12.50px;">0012806</div>
<div class="a" style="left:395px;top:583.25px;width:14px;height:1.2px;background:#7a7a7a"></div>
<div class="a " style="left:468px;top:572.05px;font-size:13px;line-height:16px;color:#296586;transform:scaleY(1.08);transform-origin:0 12.50px;">4210451</div>
<div class="a " style="left:566px;top:572.05px;font-size:13px;line-height:16px;color:#3d3d3d;transform:scaleY(1.08);transform-origin:0 12.50px;">INV_117131</div>
<div class="a " style="left:685.8px;top:572.05px;font-size:13px;line-height:16px;color:#3d3d3d;transform:scaleY(1.08);transform-origin:0 12.50px;">300000113827394</div>
<div class="a " style="left:806px;top:572.05px;font-size:13px;line-height:16px;color:#296586;transform:scaleY(1.08);transform-origin:0 12.50px;">424150F-906<span style="margin-left:2.7px">P</span><span style="color:#333;letter-spacing:0.45px;margin-left:1.6px">...</span></div>
<div class="a " style="left:900px;top:572.05px;font-size:13px;line-height:16px;color:#3d3d3d;transform:scaleY(1.08);transform-origin:0 12.50px;width:101.5px;text-align:right">2<span style="margin-left:5.5px">CASE</span></div>
<div class="a" style="left:1056.5px;top:571.35px;width:18px;height:16px"><svg width="18" height="16" viewBox="0 0 18 16"><path d="M1.7 6.6 C2.2 1.0 11.8 -0.3 14.3 4.3" fill="none" stroke="#7d848b" stroke-width="2.5"/><path d="M16.6 1.3 L16.6 7.1 L10.8 7.1 Z" fill="#7d848b"/><rect x="1.15" y="8.35" width="6.2" height="6.3" rx="1" fill="none" stroke="#7d848b" stroke-width="1.5"/><rect x="2.8" y="10.5" width="2.8" height="2.9" fill="#7d848b"/><circle cx="13.5" cy="11.7" r="3.0" fill="none" stroke="#7d848b" stroke-width="1.5"/><circle cx="13.7" cy="11.8" r="1.2" fill="#7d848b"/></svg></div>
<div class="a " style="left:1133.3px;top:572.05px;font-size:13px;line-height:16px;color:#3d3d3d;transform:scaleY(1.08);transform-origin:0 12.50px;">Open</div>
<div class="a " style="left:1231.6px;top:572.05px;font-size:13px;line-height:16px;color:#3d3d3d;transform:scaleY(1.08);transform-origin:0 12.50px;">Interfaced to Shipping</div>
<div class="a " style="left:1394.3px;top:572.05px;font-size:13px;line-height:16px;color:#3d3d3d;transform:scaleY(1.08);transform-origin:0 12.50px;">Awaiting fulfillment</div>
<div class="a " style="left:1514.3px;top:572.05px;font-size:13px;line-height:16px;color:#3d3d3d;transform:scaleY(1.08);transform-origin:0 12.50px;">Inventory</div>
<div class="a lk" style="left:43px;top:607.55px;font-size:13px;line-height:16px;color:#296586;transform:scaleY(1.08);transform-origin:0 12.50px;">32880</div>
<div class="a " style="left:173.8px;top:607.55px;font-size:13px;line-height:16px;color:#3d3d3d;transform:scaleY(1.08);transform-origin:0 12.50px;">9</div>
<svg class="a" style="left:239px;top:607.55px" width="10" height="11" viewBox="0 0 10 11"><path d="M0 0 H9.8 L0 10.2 Z" fill="#f1a078"/></svg>
<div class="a " style="left:246.5px;top:607.55px;font-size:13px;line-height:16px;color:#3d3d3d;transform:scaleY(1.08);transform-origin:0 12.50px;">0012805</div>
<div class="a" style="left:395px;top:618.75px;width:14px;height:1.2px;background:#7a7a7a"></div>
<div class="a " style="left:468px;top:607.55px;font-size:13px;line-height:16px;color:#296586;transform:scaleY(1.08);transform-origin:0 12.50px;">4210451</div>
<div class="a " style="left:566px;top:607.55px;font-size:13px;line-height:16px;color:#3d3d3d;transform:scaleY(1.08);transform-origin:0 12.50px;">INV_117131</div>
<div class="a " style="left:685.8px;top:607.55px;font-size:13px;line-height:16px;color:#3d3d3d;transform:scaleY(1.08);transform-origin:0 12.50px;">300000113827387</div>
<div class="a " style="left:806px;top:607.55px;font-size:13px;line-height:16px;color:#296586;transform:scaleY(1.08);transform-origin:0 12.50px;">424150F-906<span style="margin-left:2.7px">P</span><span style="color:#333;letter-spacing:0.45px;margin-left:1.6px">...</span></div>
<div class="a " style="left:900px;top:607.55px;font-size:13px;line-height:16px;color:#3d3d3d;transform:scaleY(1.08);transform-origin:0 12.50px;width:101.5px;text-align:right">2<span style="margin-left:5.5px">CASE</span></div>
<div class="a" style="left:1056.5px;top:606.85px;width:18px;height:16px"><svg width="18" height="16" viewBox="0 0 18 16"><path d="M1.7 6.6 C2.2 1.0 11.8 -0.3 14.3 4.3" fill="none" stroke="#7d848b" stroke-width="2.5"/><path d="M16.6 1.3 L16.6 7.1 L10.8 7.1 Z" fill="#7d848b"/><rect x="1.15" y="8.35" width="6.2" height="6.3" rx="1" fill="none" stroke="#7d848b" stroke-width="1.5"/><rect x="2.8" y="10.5" width="2.8" height="2.9" fill="#7d848b"/><circle cx="13.5" cy="11.7" r="3.0" fill="none" stroke="#7d848b" stroke-width="1.5"/><circle cx="13.7" cy="11.8" r="1.2" fill="#7d848b"/></svg></div>
<div class="a " style="left:1133.3px;top:607.55px;font-size:13px;line-height:16px;color:#3d3d3d;transform:scaleY(1.08);transform-origin:0 12.50px;">Open</div>
<div class="a " style="left:1231.6px;top:607.55px;font-size:13px;line-height:16px;color:#3d3d3d;transform:scaleY(1.08);transform-origin:0 12.50px;">Interfaced to Shipping</div>
<div class="a " style="left:1394.3px;top:607.55px;font-size:13px;line-height:16px;color:#3d3d3d;transform:scaleY(1.08);transform-origin:0 12.50px;">Awaiting fulfillment</div>
<div class="a " style="left:1514.3px;top:607.55px;font-size:13px;line-height:16px;color:#3d3d3d;transform:scaleY(1.08);transform-origin:0 12.50px;">Inventory</div>
<div class="a lk" style="left:43px;top:644.05px;font-size:13px;line-height:16px;color:#296586;transform:scaleY(1.08);transform-origin:0 12.50px;">32880</div>
<div class="a " style="left:173.8px;top:644.05px;font-size:13px;line-height:16px;color:#3d3d3d;transform:scaleY(1.08);transform-origin:0 12.50px;">11</div>
<svg class="a" style="left:239px;top:644.05px" width="10" height="11" viewBox="0 0 10 11"><path d="M0 0 H9.8 L0 10.2 Z" fill="#f1a078"/></svg>
<div class="a " style="left:246.5px;top:644.05px;font-size:13px;line-height:16px;color:#3d3d3d;transform:scaleY(1.08);transform-origin:0 12.50px;">0012024</div>
<div class="a" style="left:395px;top:655.25px;width:14px;height:1.2px;background:#7a7a7a"></div>
<div class="a " style="left:468px;top:644.05px;font-size:13px;line-height:16px;color:#296586;transform:scaleY(1.08);transform-origin:0 12.50px;">4210451</div>
<div class="a " style="left:566px;top:644.05px;font-size:13px;line-height:16px;color:#3d3d3d;transform:scaleY(1.08);transform-origin:0 12.50px;">INV_117131</div>
<div class="a " style="left:685.8px;top:644.05px;font-size:13px;line-height:16px;color:#3d3d3d;transform:scaleY(1.08);transform-origin:0 12.50px;">300000113827385</div>
<div class="a " style="left:806px;top:644.05px;font-size:13px;line-height:16px;color:#296586;transform:scaleY(1.08);transform-origin:0 12.50px;">424150F-906<span style="margin-left:2.7px">P</span><span style="color:#333;letter-spacing:0.45px;margin-left:1.6px">...</span></div>
<div class="a " style="left:900px;top:644.05px;font-size:13px;line-height:16px;color:#3d3d3d;transform:scaleY(1.08);transform-origin:0 12.50px;width:101.5px;text-align:right">3<span style="margin-left:5.5px">BAG</span></div>
<div class="a" style="left:1056.5px;top:643.35px;width:18px;height:16px"><svg width="18" height="16" viewBox="0 0 18 16"><path d="M1.7 6.6 C2.2 1.0 11.8 -0.3 14.3 4.3" fill="none" stroke="#7d848b" stroke-width="2.5"/><path d="M16.6 1.3 L16.6 7.1 L10.8 7.1 Z" fill="#7d848b"/><rect x="1.15" y="8.35" width="6.2" height="6.3" rx="1" fill="none" stroke="#7d848b" stroke-width="1.5"/><rect x="2.8" y="10.5" width="2.8" height="2.9" fill="#7d848b"/><circle cx="13.5" cy="11.7" r="3.0" fill="none" stroke="#7d848b" stroke-width="1.5"/><circle cx="13.7" cy="11.8" r="1.2" fill="#7d848b"/></svg></div>
<div class="a " style="left:1133.3px;top:644.05px;font-size:13px;line-height:16px;color:#3d3d3d;transform:scaleY(1.08);transform-origin:0 12.50px;">Open</div>
<div class="a " style="left:1231.6px;top:644.05px;font-size:13px;line-height:16px;color:#3d3d3d;transform:scaleY(1.08);transform-origin:0 12.50px;">Interfaced to Shipping</div>
<div class="a " style="left:1394.3px;top:644.05px;font-size:13px;line-height:16px;color:#3d3d3d;transform:scaleY(1.08);transform-origin:0 12.50px;">Awaiting fulfillment</div>
<div class="a " style="left:1514.3px;top:644.05px;font-size:13px;line-height:16px;color:#3d3d3d;transform:scaleY(1.08);transform-origin:0 12.50px;">Inventory</div>
<div class="a lk" style="left:43px;top:678.55px;font-size:13px;line-height:16px;color:#296586;transform:scaleY(1.08);transform-origin:0 12.50px;">32880</div>
<div class="a " style="left:173.8px;top:678.55px;font-size:13px;line-height:16px;color:#3d3d3d;transform:scaleY(1.08);transform-origin:0 12.50px;">12</div>
<svg class="a" style="left:239px;top:678.55px" width="10" height="11" viewBox="0 0 10 11"><path d="M0 0 H9.8 L0 10.2 Z" fill="#f1a078"/></svg>
<div class="a " style="left:246.5px;top:678.55px;font-size:13px;line-height:16px;color:#3d3d3d;transform:scaleY(1.08);transform-origin:0 12.50px;">0011608</div>
<div class="a" style="left:395px;top:689.75px;width:14px;height:1.2px;background:#7a7a7a"></div>
<div class="a " style="left:468px;top:678.55px;font-size:13px;line-height:16px;color:#296586;transform:scaleY(1.08);transform-origin:0 12.50px;">4210451</div>
<div class="a " style="left:566px;top:678.55px;font-size:13px;line-height:16px;color:#3d3d3d;transform:scaleY(1.08);transform-origin:0 12.50px;">INV_117131</div>
<div class="a " style="left:685.8px;top:678.55px;font-size:13px;line-height:16px;color:#3d3d3d;transform:scaleY(1.08);transform-origin:0 12.50px;">300000113827378</div>
<div class="a " style="left:806px;top:678.55px;font-size:13px;line-height:16px;color:#296586;transform:scaleY(1.08);transform-origin:0 12.50px;">424150F-906<span style="margin-left:2.7px">P</span><span style="color:#333;letter-spacing:0.45px;margin-left:1.6px">...</span></div>
<div class="a " style="left:900px;top:678.55px;font-size:13px;line-height:16px;color:#3d3d3d;transform:scaleY(1.08);transform-origin:0 12.50px;width:101.5px;text-align:right">4<span style="margin-left:5.5px">BOX</span></div>
<div class="a" style="left:1056.5px;top:677.85px;width:18px;height:16px"><svg width="18" height="16" viewBox="0 0 18 16"><path d="M1.7 6.6 C2.2 1.0 11.8 -0.3 14.3 4.3" fill="none" stroke="#7d848b" stroke-width="2.5"/><path d="M16.6 1.3 L16.6 7.1 L10.8 7.1 Z" fill="#7d848b"/><rect x="1.15" y="8.35" width="6.2" height="6.3" rx="1" fill="none" stroke="#7d848b" stroke-width="1.5"/><rect x="2.8" y="10.5" width="2.8" height="2.9" fill="#7d848b"/><circle cx="13.5" cy="11.7" r="3.0" fill="none" stroke="#7d848b" stroke-width="1.5"/><circle cx="13.7" cy="11.8" r="1.2" fill="#7d848b"/></svg></div>
<div class="a " style="left:1133.3px;top:678.55px;font-size:13px;line-height:16px;color:#3d3d3d;transform:scaleY(1.08);transform-origin:0 12.50px;">Open</div>
<div class="a " style="left:1231.6px;top:678.55px;font-size:13px;line-height:16px;color:#3d3d3d;transform:scaleY(1.08);transform-origin:0 12.50px;">Interfaced to Shipping</div>
<div class="a " style="left:1394.3px;top:678.55px;font-size:13px;line-height:16px;color:#3d3d3d;transform:scaleY(1.08);transform-origin:0 12.50px;">Awaiting fulfillment</div>
<div class="a " style="left:1514.3px;top:678.55px;font-size:13px;line-height:16px;color:#3d3d3d;transform:scaleY(1.08);transform-origin:0 12.50px;">Inventory</div>
<div class="a lk" style="left:43px;top:714.05px;font-size:13px;line-height:16px;color:#296586;transform:scaleY(1.08);transform-origin:0 12.50px;">32880</div>
<div class="a " style="left:173.8px;top:714.05px;font-size:13px;line-height:16px;color:#3d3d3d;transform:scaleY(1.08);transform-origin:0 12.50px;">13</div>
<svg class="a" style="left:239px;top:714.05px" width="10" height="11" viewBox="0 0 10 11"><path d="M0 0 H9.8 L0 10.2 Z" fill="#f1a078"/></svg>
<div class="a " style="left:246.5px;top:714.05px;font-size:13px;line-height:16px;color:#3d3d3d;transform:scaleY(1.08);transform-origin:0 12.50px;">0011606</div>
<div class="a" style="left:395px;top:725.25px;width:14px;height:1.2px;background:#7a7a7a"></div>
<div class="a " style="left:468px;top:714.05px;font-size:13px;line-height:16px;color:#296586;transform:scaleY(1.08);transform-origin:0 12.50px;">4210451</div>
<div class="a " style="left:566px;top:714.05px;font-size:13px;line-height:16px;color:#3d3d3d;transform:scaleY(1.08);transform-origin:0 12.50px;">INV_117131</div>
<div class="a " style="left:685.8px;top:714.05px;font-size:13px;line-height:16px;color:#3d3d3d;transform:scaleY(1.08);transform-origin:0 12.50px;">300000113827377</div>
<div class="a " style="left:806px;top:714.05px;font-size:13px;line-height:16px;color:#296586;transform:scaleY(1.08);transform-origin:0 12.50px;">424150F-906<span style="margin-left:2.7px">P</span><span style="color:#333;letter-spacing:0.45px;margin-left:1.6px">...</span></div>
<div class="a " style="left:900px;top:714.05px;font-size:13px;line-height:16px;color:#3d3d3d;transform:scaleY(1.08);transform-origin:0 12.50px;width:101.5px;text-align:right">4<span style="margin-left:5.5px">BOX</span></div>
<div class="a" style="left:1056.5px;top:713.35px;width:18px;height:16px"><svg width="18" height="16" viewBox="0 0 18 16"><path d="M1.7 6.6 C2.2 1.0 11.8 -0.3 14.3 4.3" fill="none" stroke="#7d848b" stroke-width="2.5"/><path d="M16.6 1.3 L16.6 7.1 L10.8 7.1 Z" fill="#7d848b"/><rect x="1.15" y="8.35" width="6.2" height="6.3" rx="1" fill="none" stroke="#7d848b" stroke-width="1.5"/><rect x="2.8" y="10.5" width="2.8" height="2.9" fill="#7d848b"/><circle cx="13.5" cy="11.7" r="3.0" fill="none" stroke="#7d848b" stroke-width="1.5"/><circle cx="13.7" cy="11.8" r="1.2" fill="#7d848b"/></svg></div>
<div class="a " style="left:1133.3px;top:714.05px;font-size:13px;line-height:16px;color:#3d3d3d;transform:scaleY(1.08);transform-origin:0 12.50px;">Open</div>
<div class="a " style="left:1231.6px;top:714.05px;font-size:13px;line-height:16px;color:#3d3d3d;transform:scaleY(1.08);transform-origin:0 12.50px;">Interfaced to Shipping</div>
<div class="a " style="left:1394.3px;top:714.05px;font-size:13px;line-height:16px;color:#3d3d3d;transform:scaleY(1.08);transform-origin:0 12.50px;">Awaiting fulfillment</div>
<div class="a " style="left:1514.3px;top:714.05px;font-size:13px;line-height:16px;color:#3d3d3d;transform:scaleY(1.08);transform-origin:0 12.50px;">Inventory</div>
<div class="a lk" style="left:43px;top:749.55px;font-size:13px;line-height:16px;color:#296586;transform:scaleY(1.08);transform-origin:0 12.50px;">32880</div>
<div class="a " style="left:173.8px;top:749.55px;font-size:13px;line-height:16px;color:#3d3d3d;transform:scaleY(1.08);transform-origin:0 12.50px;">14</div>
<svg class="a" style="left:239px;top:749.55px" width="10" height="11" viewBox="0 0 10 11"><path d="M0 0 H9.8 L0 10.2 Z" fill="#f1a078"/></svg>
<div class="a " style="left:246.5px;top:749.55px;font-size:13px;line-height:16px;color:#3d3d3d;transform:scaleY(1.08);transform-origin:0 12.50px;">0011577</div>
<div class="a" style="left:395px;top:760.75px;width:14px;height:1.2px;background:#7a7a7a"></div>
<div class="a " style="left:468px;top:749.55px;font-size:13px;line-height:16px;color:#296586;transform:scaleY(1.08);transform-origin:0 12.50px;">4210451</div>
<div class="a " style="left:566px;top:749.55px;font-size:13px;line-height:16px;color:#3d3d3d;transform:scaleY(1.08);transform-origin:0 12.50px;">INV_117131</div>
<div class="a " style="left:685.8px;top:749.55px;font-size:13px;line-height:16px;color:#3d3d3d;transform:scaleY(1.08);transform-origin:0 12.50px;">300000113827376</div>
<div class="a " style="left:806px;top:749.55px;font-size:13px;line-height:16px;color:#296586;transform:scaleY(1.08);transform-origin:0 12.50px;">424150F-906<span style="margin-left:2.7px">P</span><span style="color:#333;letter-spacing:0.45px;margin-left:1.6px">...</span></div>
<div class="a " style="left:900px;top:749.55px;font-size:13px;line-height:16px;color:#3d3d3d;transform:scaleY(1.08);transform-origin:0 12.50px;width:101.5px;text-align:right">14<span style="margin-left:5.5px">CASE</span></div>
<div class="a" style="left:1056.5px;top:748.85px;width:18px;height:16px"><svg width="18" height="16" viewBox="0 0 18 16"><path d="M1.7 6.6 C2.2 1.0 11.8 -0.3 14.3 4.3" fill="none" stroke="#7d848b" stroke-width="2.5"/><path d="M16.6 1.3 L16.6 7.1 L10.8 7.1 Z" fill="#7d848b"/><rect x="1.15" y="8.35" width="6.2" height="6.3" rx="1" fill="none" stroke="#7d848b" stroke-width="1.5"/><rect x="2.8" y="10.5" width="2.8" height="2.9" fill="#7d848b"/><circle cx="13.5" cy="11.7" r="3.0" fill="none" stroke="#7d848b" stroke-width="1.5"/><circle cx="13.7" cy="11.8" r="1.2" fill="#7d848b"/></svg></div>
<div class="a " style="left:1133.3px;top:749.55px;font-size:13px;line-height:16px;color:#3d3d3d;transform:scaleY(1.08);transform-origin:0 12.50px;">Open</div>
<div class="a " style="left:1231.6px;top:749.55px;font-size:13px;line-height:16px;color:#3d3d3d;transform:scaleY(1.08);transform-origin:0 12.50px;">Interfaced to Shipping</div>
<div class="a " style="left:1394.3px;top:749.55px;font-size:13px;line-height:16px;color:#3d3d3d;transform:scaleY(1.08);transform-origin:0 12.50px;">Awaiting fulfillment</div>
<div class="a " style="left:1514.3px;top:749.55px;font-size:13px;line-height:16px;color:#3d3d3d;transform:scaleY(1.08);transform-origin:0 12.50px;">Inventory</div>
<div class="a lk" style="left:43px;top:785.05px;font-size:13px;line-height:16px;color:#296586;transform:scaleY(1.08);transform-origin:0 12.50px;">32880</div>
<div class="a " style="left:173.8px;top:785.05px;font-size:13px;line-height:16px;color:#3d3d3d;transform:scaleY(1.08);transform-origin:0 12.50px;">15</div>
<svg class="a" style="left:239px;top:785.05px" width="10" height="11" viewBox="0 0 10 11"><path d="M0 0 H9.8 L0 10.2 Z" fill="#f1a078"/></svg>
<div class="a " style="left:246.5px;top:785.05px;font-size:13px;line-height:16px;color:#3d3d3d;transform:scaleY(1.08);transform-origin:0 12.50px;">0010453</div>
<div class="a" style="left:395px;top:796.25px;width:14px;height:1.2px;background:#7a7a7a"></div>
<div class="a " style="left:468px;top:785.05px;font-size:13px;line-height:16px;color:#296586;transform:scaleY(1.08);transform-origin:0 12.50px;">4210451</div>
<div class="a " style="left:566px;top:785.05px;font-size:13px;line-height:16px;color:#3d3d3d;transform:scaleY(1.08);transform-origin:0 12.50px;">INV_117131</div>
<div class="a " style="left:685.8px;top:785.05px;font-size:13px;line-height:16px;color:#3d3d3d;transform:scaleY(1.08);transform-origin:0 12.50px;">300000113827369</div>
<div class="a " style="left:806px;top:785.05px;font-size:13px;line-height:16px;color:#296586;transform:scaleY(1.08);transform-origin:0 12.50px;">424150F-906<span style="margin-left:2.7px">P</span><span style="color:#333;letter-spacing:0.45px;margin-left:1.6px">...</span></div>
<div class="a " style="left:900px;top:785.05px;font-size:13px;line-height:16px;color:#3d3d3d;transform:scaleY(1.08);transform-origin:0 12.50px;width:101.5px;text-align:right">18<span style="margin-left:5.5px">CASE</span></div>
<div class="a" style="left:1056.5px;top:784.35px;width:18px;height:16px"><svg width="18" height="16" viewBox="0 0 18 16"><path d="M1.7 6.6 C2.2 1.0 11.8 -0.3 14.3 4.3" fill="none" stroke="#7d848b" stroke-width="2.5"/><path d="M16.6 1.3 L16.6 7.1 L10.8 7.1 Z" fill="#7d848b"/><rect x="1.15" y="8.35" width="6.2" height="6.3" rx="1" fill="none" stroke="#7d848b" stroke-width="1.5"/><rect x="2.8" y="10.5" width="2.8" height="2.9" fill="#7d848b"/><circle cx="13.5" cy="11.7" r="3.0" fill="none" stroke="#7d848b" stroke-width="1.5"/><circle cx="13.7" cy="11.8" r="1.2" fill="#7d848b"/></svg></div>
<div class="a " style="left:1133.3px;top:785.05px;font-size:13px;line-height:16px;color:#3d3d3d;transform:scaleY(1.08);transform-origin:0 12.50px;">Open</div>
<div class="a " style="left:1231.6px;top:785.05px;font-size:13px;line-height:16px;color:#3d3d3d;transform:scaleY(1.08);transform-origin:0 12.50px;">Interfaced to Shipping</div>
<div class="a " style="left:1394.3px;top:785.05px;font-size:13px;line-height:16px;color:#3d3d3d;transform:scaleY(1.08);transform-origin:0 12.50px;">Awaiting fulfillment</div>
<div class="a " style="left:1514.3px;top:785.05px;font-size:13px;line-height:16px;color:#3d3d3d;transform:scaleY(1.08);transform-origin:0 12.50px;">Inventory</div>
<div class="a" style="left:1865px;top:314px;width:18px;height:479px;background:#f1f1f1"></div>
<svg class="a" style="left:1869px;top:321px" width="10" height="6" viewBox="0 0 10 6"><path d="M0.8 5.3 L5 0.8 L9.2 5.3 Z" fill="#a3a3a3"/></svg>
<div class="a" style="left:1867px;top:332px;width:14px;height:449px;background:#c1c1c1"></div>
<div class="a" style="left:16px;top:631px;width:1846px;height:44px;border:3px solid #e2444a;box-shadow:0 3px 5px rgba(0,0,0,.28), inset 0 3px 4px rgba(0,0,0,.18)"></div>
<div class="a" style="left:1607px;top:632px;width:41px;height:40px;border-radius:50%;background:#f44444;box-shadow:0 3px 4px rgba(0,0,0,.35)"></div>
<svg class="a" style="left:1600px;top:630px" width="40" height="40" viewBox="0 0 40 40"><path d="M21.1 12.7 L23.3 12.7 L23.3 30 L20.9 30 L20.9 16.6 C19.8 17.6 18.3 18.5 16.7 19.1 L16.7 16.8 C18.6 15.9 20.3 14.4 21.1 12.7 Z" fill="#fff"/></svg>
<div class="a " style="left:1627.0px;top:636.78px;font-size:24px;line-height:30px;color:#fff;transform:scaleY(1.0);transform-origin:0 23.32px;">9</div>
</body></html>
